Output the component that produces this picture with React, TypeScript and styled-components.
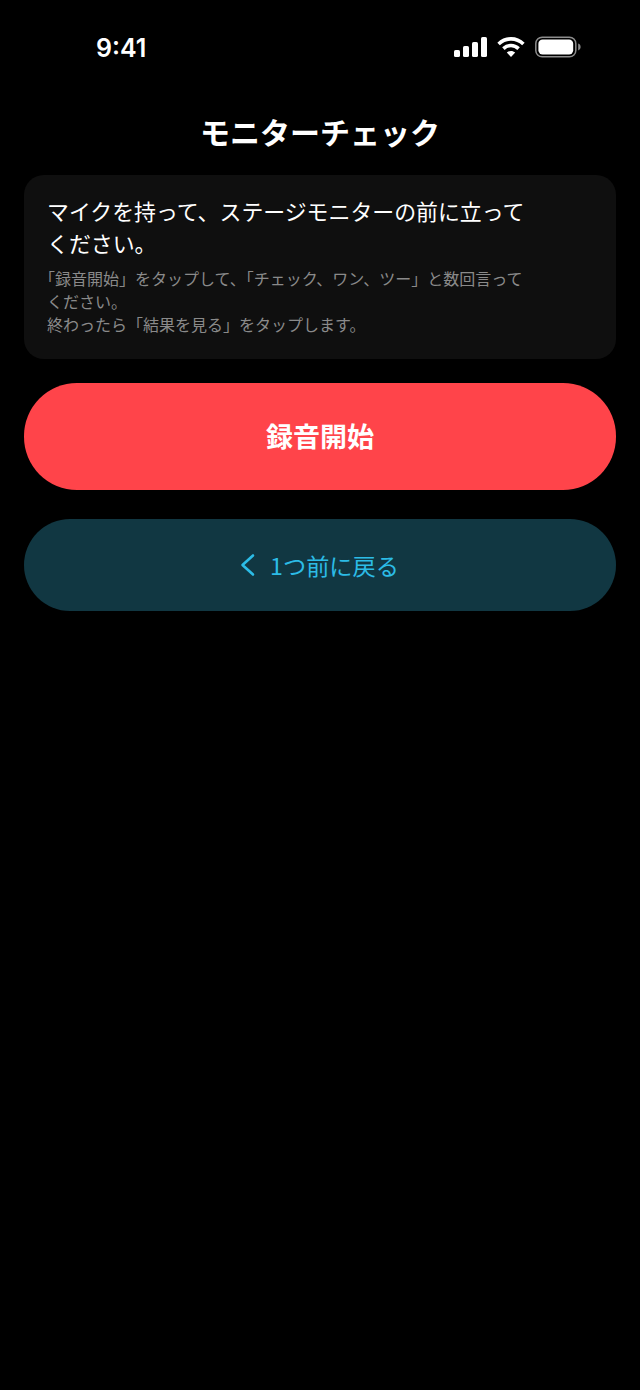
import React from "react";
import styled, { createGlobalStyle } from "styled-components";

const GlobalStyle = createGlobalStyle`
  html, body {
    margin: 0;
    padding: 0;
    background: #000000;
  }
  body {
    font-family: "Noto Sans CJK JP", "Liberation Sans", sans-serif;
  }
`;

const App = () => {
  return (
    <>
      <GlobalStyle />
      <Screen>
        <StatusBar>
          <Clock>9:41</Clock>
          <StatusIcons>
            <svg width="33" height="20" viewBox="0 0 33 20" fill="#fff">
              <rect x="0" y="13" width="6" height="7" rx="1.6" />
              <rect x="9" y="9" width="6" height="11" rx="1.6" />
              <rect x="18" y="5" width="6" height="15" rx="1.6" />
              <rect x="27" y="0" width="6" height="20" rx="1.6" />
            </svg>
            <svg width="28" height="20" viewBox="0 0 28 20" fill="none" stroke="#fff" strokeWidth="3.6">
              <path d="M1.6 7 C8.6 0.2 19.4 0.2 26.4 7" />
              <path d="M6.4 11.6 C10.8 7.4 17.2 7.4 21.6 11.6" />
              <path d="M14 20 L9.8 15.6 C12.2 13.4 15.8 13.4 18.2 15.6 Z" fill="#fff" stroke="none" />
            </svg>
            <svg width="46" height="22" viewBox="0 0 46 22" fill="none">
              <rect x="0.8" y="1.2" width="40" height="19.6" rx="6.4" stroke="#8c8c8c" strokeWidth="1.5" />
              <rect x="3.4" y="3.6" width="34.8" height="14.8" rx="4.2" fill="#fff" />
              <path d="M43.2 7.6 C44.8 8.2 45.6 9.4 45.6 11 C45.6 12.6 44.8 13.8 43.2 14.4 Z" fill="#8c8c8c" />
            </svg>
          </StatusIcons>
        </StatusBar>
        <Title>モニターチェック</Title>
        <Content>
          <InfoCard>
            <Lead>
              マイクを持って、ステージモニターの前に立って
              <br />
              ください。
            </Lead>
            <Note>
              <Bracket>「</Bracket>録音開始」をタップして、「チェック、ワン、ツー」と数回言って
              <br />
              ください。
              <br />
              終わったら「結果を見る」をタップします。
            </Note>
          </InfoCard>
          <RecordButton>
            <span>録音開始</span>
          </RecordButton>
          <BackButton>
            <svg width="18" height="24" viewBox="0 0 18 24" fill="none" stroke="#2cbce6" strokeWidth="2.6" strokeLinecap="round" strokeLinejoin="round">
              <path d="M14 2.5 L3.5 12 L14 21.5" />
            </svg>
            <span>1つ前に戻る</span>
          </BackButton>
        </Content>
      </Screen>
    </>
  );
};

export default App;

const Screen = styled.div`
  width: 640px;
  height: 1390px;
  background: #000000;
  overflow: hidden;
`;

const StatusBar = styled.div`
  height: 94px;
  padding: 2px 59px 0 96px;
  box-sizing: border-box;
  display: flex;
  align-items: center;
  justify-content: space-between;
`;

const Clock = styled.div`
  font-family: "Inter", "Liberation Sans", sans-serif;
  font-size: 25px;
  font-weight: 600;
  color: #ffffff;
`;

const StatusIcons = styled.div`
  display: flex;
  align-items: center;
  gap: 10px;
  margin-top: -2px;
`;

const Title = styled.h1`
  margin: 0 0 2px;
  height: 74px;
  line-height: 74px;
  text-align: center;
  font-size: 30px;
  font-weight: 700;
  color: #ffffff;
`;

const Content = styled.div`
  padding: 5px 24px 0;
  display: flex;
  flex-direction: column;
`;

const InfoCard = styled.div`
  height: 184px;
  box-sizing: border-box;
  padding: 20px 23px 0;
  background: #0f0f0f;
  border-radius: 20px;
`;

const Lead = styled.p`
  margin: 0 0 8px;
  font-size: 21.9px;
  line-height: 32px;
  color: #ffffff;
  white-space: nowrap;
`;

const Note = styled.p`
  margin: 0;
  font-size: 16px;
  line-height: 23px;
  color: #8a8a8a;
  white-space: nowrap;
`;

const Bracket = styled.span`
  font-feature-settings: "halt";
`;

const PillButton = styled.button`
  width: 100%;
  border: none;
  padding: 0;
  display: flex;
  align-items: center;
  justify-content: center;
  font-family: inherit;
`;

const RecordButton = styled(PillButton)`
  height: 107px;
  margin-top: 24px;
  padding-bottom: 3px;
  background: #ff444a;
  border-radius: 53px;
  font-size: 27px;
  font-weight: 700;
  color: #ffffff;
`;

const BackButton = styled(PillButton)`
  height: 92px;
  margin-top: 29px;
  padding-right: 2px;
  gap: 13px;
  background: #113742;
  border-radius: 46px;
  font-size: 23.2px;
  font-weight: 400;
  color: #2cbce6;
`;
